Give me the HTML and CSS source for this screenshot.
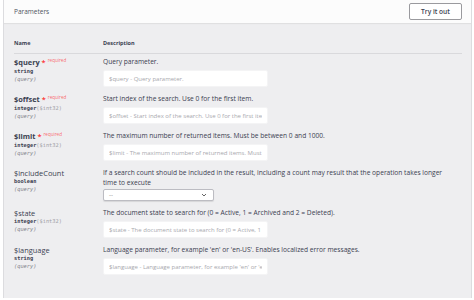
FILE: index.html
```html
<!DOCTYPE html>
<html lang="en">
<head>
    <meta charset="UTF-8">
    <meta name="viewport" content="width=device-width, initial-scale=1.0">
    <title>Parameters</title>
    <link rel="stylesheet" href="styles.css">
</head>
<body>
    <div class="opblock">
        <div class="section-header">
            <h4>Parameters</h4>
            <button class="try-out">Try it out</button>
        </div>

        <div class="params">
            <div class="params-head">
                <div>Name</div>
                <div>Description</div>
            </div>

            <div class="param">
                <div class="col-name">
                    <div class="param-name required">$query<span class="star">&nbsp;*</span><span class="req">required</span></div>
                    <div class="param-type">string</div>
                    <div class="param-in">(query)</div>
                </div>
                <div class="col-desc">
                    <p>Query parameter.</p>
                    <input type="text" placeholder="$query - Query parameter.">
                </div>
            </div>

            <div class="param">
                <div class="col-name">
                    <div class="param-name required">$offset<span class="star">&nbsp;*</span><span class="req">required</span></div>
                    <div class="param-type">integer<span class="fmt">($int32)</span></div>
                    <div class="param-in">(query)</div>
                </div>
                <div class="col-desc">
                    <p>Start index of the search. Use 0 for the first item.</p>
                    <input type="text" placeholder="$offset - Start index of the search. Use 0 for the first item.">
                </div>
            </div>

            <div class="param">
                <div class="col-name">
                    <div class="param-name required">$limit<span class="star">&nbsp;*</span><span class="req">required</span></div>
                    <div class="param-type">integer<span class="fmt">($int32)</span></div>
                    <div class="param-in">(query)</div>
                </div>
                <div class="col-desc">
                    <p>The maximum number of returned items. Must be between 0 and 1000.</p>
                    <input type="text" placeholder="$limit - The maximum number of returned items. Must be between 0 and 1000.">
                </div>
            </div>

            <div class="param">
                <div class="col-name">
                    <div class="param-name">$includeCount</div>
                    <div class="param-type">boolean</div>
                    <div class="param-in">(query)</div>
                </div>
                <div class="col-desc">
                    <p>If a search count should be included in the result, including a count may result that the operation takes longer time to execute</p>
                    <div class="select">
                        <span>--</span>
                        <svg width="6" height="4" viewBox="0 0 6 4"><path d="M1 1l2 2 2-2" fill="none" stroke="#555" stroke-width="0.9"/></svg>
                    </div>
                </div>
            </div>

            <div class="param">
                <div class="col-name">
                    <div class="param-name">$state</div>
                    <div class="param-type">integer<span class="fmt">($int32)</span></div>
                    <div class="param-in">(query)</div>
                </div>
                <div class="col-desc">
                    <p>The document state to search for (0 = Active, 1 = Archived and 2 = Deleted).</p>
                    <input type="text" placeholder="$state - The document state to search for (0 = Active, 1 = Archived and 2 = Deleted).">
                </div>
            </div>

            <div class="param">
                <div class="col-name">
                    <div class="param-name">$language</div>
                    <div class="param-type">string</div>
                    <div class="param-in">(query)</div>
                </div>
                <div class="col-desc">
                    <p>Language parameter, for example 'en' or 'en-US'. Enables localized error messages.</p>
                    <input type="text" placeholder="$language - Language parameter, for example 'en' or 'en-US'. Enables localized error messages.">
                </div>
            </div>
        </div>
    </div>
</body>
</html>
```

FILE: styles.css
```css
body {
    margin: 0;
    background: #fff;
    font-family: "Open Sans", sans-serif;
    color: #3b4151;
}
.opblock {
    margin: 0 2px 0 3px;
    height: 298px;
    background: #eeeef0;
    border-left: 1px solid #dcdcdf;
    border-right: 1px solid #dcdcdf;
    overflow: hidden;
}
.section-header {
    display: flex;
    align-items: center;
    justify-content: space-between;
    height: 17px;
    padding: 3px 9px 3px 10px;
    background: #fcfcfc;
    box-shadow: 0 1px 1px rgba(0, 0, 0, 0.06);
}
.section-header h4 {
    margin: 0;
    font-size: 6.5px;
    font-weight: 400;
    color: #50555f;
}
.try-out {
    width: 53px;
    height: 17px;
    padding: 0;
    background: #fff;
    border: 1px solid #9a9a9e;
    border-radius: 2px;
    font-family: "Open Sans", sans-serif;
    font-size: 6.6px;
    font-weight: 600;
    color: #3b4151;
}
.params {
    padding: 0 9px 0 10px;
}
.params-head {
    display: grid;
    grid-template-columns: 89px 1fr;
    padding: 16px 0 6px;
    border-bottom: 1px solid #d9d9dc;
    font-size: 5.5px;
    font-weight: 700;
    line-height: 8px;
}
.param {
    display: grid;
    grid-template-columns: 89px 1fr;
    padding: 3px 0 4px;
}
.param-name {
    font-size: 7.4px;
    line-height: 10px;
    white-space: nowrap;
}
.param-name.required {
    font-weight: 700;
}
.star {
    color: red;
    font-weight: 400;
}
.req {
    position: relative;
    top: -3px;
    padding-left: 2px;
    font-size: 4.6px;
    font-weight: 400;
    color: rgba(255, 0, 0, 0.6);
}
.param-type {
    font-family: "DejaVu Sans Mono", monospace;
    font-size: 5.3px;
    font-weight: 700;
    line-height: 7px;
}
.fmt {
    font-weight: 400;
    color: #a0a0a6;
}
.param-in {
    font-family: "DejaVu Sans Mono", monospace;
    font-size: 5.3px;
    font-style: italic;
    line-height: 8px;
    color: #808088;
}
.col-desc {
    padding-right: 12px;
}
.col-desc p {
    margin: 0;
    font-size: 6.65px;
    line-height: 10px;
}
.col-desc input {
    display: block;
    box-sizing: border-box;
    width: 165px;
    height: 17px;
    margin-top: 3px;
    padding: 0 5px;
    background: #fff;
    border: 1px solid #f4f4f5;
    border-radius: 2px;
    font-family: "Open Sans", sans-serif;
    font-size: 6px;
    color: #3b4151;
    outline: none;
}
.col-desc input::placeholder {
    color: #a8a8ae;
}
.select {
    display: flex;
    align-items: center;
    justify-content: space-between;
    box-sizing: border-box;
    width: 111px;
    height: 12px;
    margin-top: 1px;
    padding: 0 6px 0 5px;
    background: #fff;
    border: 1px solid #bcbcc2;
    border-radius: 2px;
    box-shadow: 0 1px 1px rgba(0, 0, 0, 0.1);
    font-size: 6px;
    color: #777;
}
```
